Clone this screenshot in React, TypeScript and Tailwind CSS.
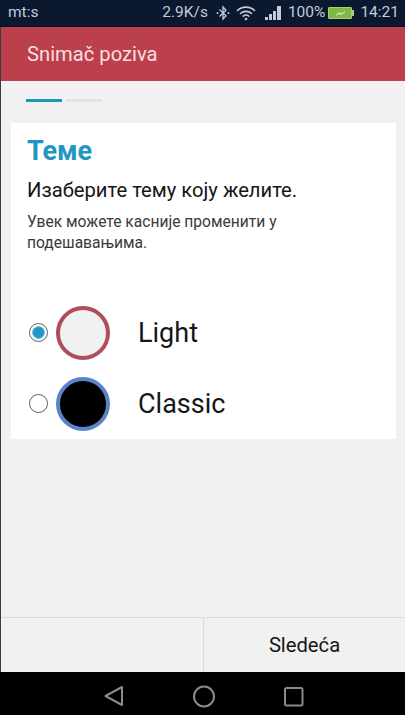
const font = { roboto: 'font-["Roboto",sans-serif]' };

function BluetoothIcon() {
  return (
    <svg width="14" height="16" viewBox="0 0 14 16" fill="none" stroke="#c3cbd8" strokeWidth="1.3">
      <path d="M3.500 4.500L10 10.800L7 14V2L10 5.200L3.500 11.500" />
      <circle cx="1.500" cy="8" r="1" fill="#c3cbd8" stroke="none" />
      <circle cx="12.500" cy="8" r="1" fill="#c3cbd8" stroke="none" />
    </svg>
  );
}

function WifiIcon() {
  return (
    <svg width="20" height="16" viewBox="0 0 20 16" fill="none" stroke="#c3cbd8" strokeWidth="1.6" strokeLinecap="round">
      <path d="M1.5 5.5C6 1 14 1 18.5 5.5" />
      <path d="M4.5 8.5C7.5 5.6 12.5 5.6 15.5 8.5" />
      <path d="M7.3 11.2C8.8 9.9 11.2 9.9 12.7 11.2" />
      <circle cx="10" cy="14" r="1.3" fill="#c3cbd8" stroke="none" />
    </svg>
  );
}

function SignalIcon() {
  return (
    <div className="flex items-end gap-[1px] h-[14px]">
      <div className="w-[3px] h-[3px] bg-[#c3cbd8]" />
      <div className="w-[3px] h-[6px] bg-[#c3cbd8]" />
      <div className="w-[3px] h-[9px] bg-[#c3cbd8]" />
      <div className="w-[4px] h-[14px] bg-[#c3cbd8]" />
    </div>
  );
}

function BatteryIcon() {
  return (
    <div className="flex items-center">
      <div className="w-[24px] h-[12px] bg-[#7fb843] border border-[#a5cf7a] rounded-[1px] flex items-center justify-center">
        <svg width="11" height="7" viewBox="0 0 11 7">
          <path d="M1 5L5 2.6L5.6 4.2L10 2L6 4.6L5.4 3.2Z" fill="#f2f7e8" stroke="#f2f7e8" strokeWidth="0.5" />
        </svg>
      </div>
      <div className="w-[2px] h-[6px] bg-[#a5cf7a]" />
    </div>
  );
}

function StatusBar() {
  return (
    <div className="h-[27px] bg-[#0a1930] flex items-center justify-between pl-[8px] pr-[6px] text-[15.5px] text-[#c3cbd8] border-b border-[#050d1a] shrink-0">
      <span>mt:s</span>
      <div className="flex items-center">
        <span className="mr-[8px]">2.9K/s</span>
        <BluetoothIcon />
        <div className="ml-[6px]">
          <WifiIcon />
        </div>
        <div className="ml-[9px] mr-[7px]">
          <SignalIcon />
        </div>
        <span>100%</span>
        <div className="ml-[3px] mr-[6px]">
          <BatteryIcon />
        </div>
        <span>14:21</span>
      </div>
    </div>
  );
}

function ThemeOption({ label, selected, ring, fill }: { label: string; selected?: boolean; ring: string; fill: string }) {
  return (
    <div className="flex items-center h-[71px]">
      <div className="ml-[18px] w-[19px] h-[19px] rounded-full border border-[#55606a] bg-white flex items-center justify-center shrink-0">
        {selected && <div className="w-[13px] h-[13px] rounded-full bg-[#1f96c8] border border-[#7cc4e0]" />}
      </div>
      <div className={`ml-[8px] w-[54px] h-[54px] rounded-full border-[4px] shrink-0 ${ring} ${fill}`} />
      <span className="ml-[28px] pt-[1px] text-[27px] text-[#161616]">{label}</span>
    </div>
  );
}

function NavBar() {
  return (
    <div className="h-[43px] bg-black flex items-center shrink-0">
      <svg width="405" height="43" viewBox="0 0 405 43" fill="none" stroke="#8a8a8a" strokeWidth="2" strokeLinejoin="round">
        <path d="M122 15V33L105.500 24Z" />
        <circle cx="204" cy="24.500" r="10" />
        <rect x="285" y="16" width="17.500" height="17.500" rx="1.500" />
      </svg>
    </div>
  );
}

export default function App() {
  return (
    <div className={`w-[405px] h-[715px] flex flex-col bg-[#f1f1f2] overflow-hidden ${font.roboto}`}>
      <StatusBar />
      <div className="flex-1 flex flex-col border-l border-[#3a3f47] min-h-0">
        <div className="h-[54px] bg-[#bb404c] flex items-center pl-[26px] text-[20.2px] text-[#f8dfe0] shrink-0">
          Snimač poziva
        </div>
        <div className="flex gap-[4px] pl-[25px] pt-[18px] h-[42px] shrink-0">
          <div className="w-[36px] h-[3px] bg-[#1f96b8]" />
          <div className="w-[36px] h-[3px] bg-[#e3e3e4]" />
        </div>
        <div className="mx-[10px] mr-[9px] h-[316px] bg-white shrink-0">
          <h1 className="pl-[16px] pt-[11px] text-[27px] leading-[34px] font-bold text-[#1f96c4]">Теме</h1>
          <p className="pl-[16px] mt-[9px] text-[20.2px] leading-[26px] text-[#161616]">Изаберите тему коју желите.</p>
          <p className="pl-[16px] mt-[9px] pr-[60px] text-[15.6px] leading-[21px] text-[#3a3a3a]">
            Увек можете касније променити у подешавањима.
          </p>
          <div className="mt-[43px]">
            <ThemeOption label="Light" selected ring="border-[#ad4f59]" fill="bg-[#f1f1f2]" />
            <ThemeOption label="Classic" ring="border-[#5a84c8]" fill="bg-black" />
          </div>
        </div>
        <div className="flex-1" />
        <div className="h-[55px] border-t border-[#dcdcdc] flex shrink-0">
          <div className="w-[203px] border-r border-[#dcdcdc]" />
          <div className="flex-1 flex items-center justify-center text-[20.2px] text-[#161616]">Sledeća</div>
        </div>
      </div>
      <NavBar />
    </div>
  );
}
